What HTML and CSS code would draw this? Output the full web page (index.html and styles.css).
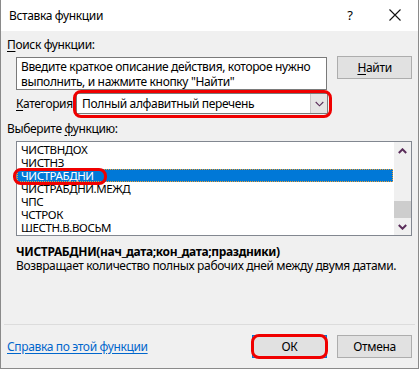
FILE: index.html
```html
<!DOCTYPE html>
<html lang="ru">
<head>
<meta charset="utf-8">
<title>Вставка функции</title>
<link rel="stylesheet" href="styles.css">
</head>
<body>
<div class="window">
  <div class="titlebar">
    <span class="title">Вставка функции</span>
    <span class="help">?</span>
    <svg class="close" width="12" height="12" viewBox="0 0 12 12"><path d="M0.5 0.5L11.5 11.5M11.5 0.5L0.5 11.5" stroke="#111" stroke-width="1.1" fill="none"/></svg>
  </div>
  <div class="content">
    <div class="label first"><u>П</u>оиск функции:</div>
    <div class="search-row">
      <div class="search-box">Введите краткое описание действия, которое нужно<br>выполнить, и нажмите кнопку "Найти"</div>
      <div class="btn find"><u>Н</u>айти</div>
    </div>
    <div class="cat-row">
      <span class="cat-label"><u>К</u>атегория:</span>
      <div class="select">
        <span class="select-text">Полный алфавитный перечень</span>
        <span class="drop"><svg width="9" height="6" viewBox="0 0 9 6"><path d="M0.7 1L4.5 4.8L8.3 1" stroke="#5a2d5a" stroke-width="1.1" fill="none"/></svg></span>
        <span class="mark mark-select"></span>
      </div>
    </div>
    <div class="label second">Выберите <u>ф</u>ункцию:</div>
    <div class="list">
      <div class="items">
        <div class="item">ЧИСТВНДОХ</div>
        <div class="item">ЧИСТНЗ</div>
        <div class="item selected">ЧИСТРАБДНИ<span class="mark mark-item"></span></div>
        <div class="item">ЧИСТРАБДНИ.МЕЖД</div>
        <div class="item">ЧПС</div>
        <div class="item">ЧСТРОК</div>
        <div class="item">ШЕСТН.В.ВОСЬМ</div>
      </div>
      <div class="scrollbar">
        <div class="arrow"><svg width="9" height="6" viewBox="0 0 9 6"><path d="M0.8 5L4.5 1.3L8.2 5" stroke="#5a2d5a" stroke-width="2" fill="none"/></svg></div>
        <div class="track"><div class="thumb"></div></div>
        <div class="arrow"><svg width="9" height="6" viewBox="0 0 9 6"><path d="M0.8 1L4.5 4.7L8.2 1" stroke="#5a2d5a" stroke-width="2" fill="none"/></svg></div>
      </div>
    </div>
    <div class="syntax">ЧИСТРАБДНИ(нач_дата;кон_дата;праздники)</div>
    <div class="desc">Возвращает количество полных рабочих дней между двумя датами.</div>
    <div class="spacer"></div>
    <div class="separator"></div>
    <div class="bottom-row">
      <a class="help-link" href="#">Справка по этой функции</a>
      <div class="buttons">
        <div class="btn ok">ОК<span class="mark mark-ok"></span></div>
        <div class="btn">Отмена</div>
      </div>
    </div>
  </div>
</div>
</body>
</html>
```
FILE: styles.css
```css
* { box-sizing: border-box; }
html, body { margin: 0; padding: 0; background: #ffffff; }
body { font-family: "Noto Sans", "Segoe UI", sans-serif; font-size: 12px; letter-spacing: -0.35px; color: #000; }
u { text-decoration: underline; text-underline-offset: 2px; }

.window {
  width: 419px;
  height: 369px;
  border: 1px solid #8a8a8a;
  border-top: none;
  display: flex;
  flex-direction: column;
  background: #f0f0f0;
}
.titlebar {
  height: 31px;
  background: #ffffff;
  display: flex;
  align-items: center;
  padding: 0 0 1px 8px;
}
.title { flex: 1; font-size: 12px; }
.help { font-size: 13px; width: 12px; margin-right: 33px; text-align: center; }
.close { margin-right: 17px; }

.content {
  flex: 1;
  display: flex;
  flex-direction: column;
  padding: 0 6px 0 6px;
}
.label { line-height: 15px; height: 15px; }
.label.first { margin-top: 6px; }
.label.second { margin-top: 7px; }

.search-row {
  display: flex;
  align-items: flex-start;
  margin: 5px 0 0 9px;
}
.search-box {
  width: 312px;
  height: 33px;
  background: #fff;
  border: 1px solid #7a7a7a;
  padding: 1px 0 0 4px;
  line-height: 15px;
  white-space: nowrap;
  overflow: hidden;
}
.btn {
  width: 75px;
  height: 23px;
  background: #e1e1e1;
  border: 1px solid #adadad;
  display: flex;
  align-items: center;
  justify-content: center;
  position: relative;
}
.find { margin: -1px 0 0 10px; }

.cat-row {
  display: flex;
  align-items: center;
  margin: 3px 0 0 9px;
  height: 21px;
}
.cat-label { width: 60px; white-space: nowrap; }
.select {
  position: relative;
  width: 252px;
  height: 21px;
  background: #fff;
  border: 1px solid #7a7a7a;
  display: flex;
  align-items: center;
}
.select-text { flex: 1; padding-left: 5px; }
.drop {
  width: 17px;
  height: 19px;
  background: #e5e5e5;
  border-left: 1px solid #c8c8c8;
  display: flex;
  align-items: center;
  justify-content: center;
}

.mark {
  position: absolute;
  border: 3px solid #f00000;
  pointer-events: none;
}
.mark-select { left: -4px; top: -4px; right: -5px; bottom: -5px; border-radius: 8px; }
.mark-item { left: -4px; top: -1px; width: 94px; bottom: -3px; border-radius: 8px; }
.mark-ok { left: -2px; top: -2px; right: -2px; bottom: -2px; border-radius: 8px; }

.list {
  margin: 5px 0 0 9px;
  width: 396px;
  height: 95px;
  background: #fff;
  border: 1px solid #828790;
  display: flex;
}
.items { flex: 1; padding-top: 1px; }
.item {
  position: relative;
  height: 13px;
  line-height: 13px;
  font-size: 11.5px;
  letter-spacing: -0.4px;
  padding-left: 4px;
  white-space: nowrap;
}
.item.selected {
  background: #0078d7;
  color: #fff;
  outline: 1px dotted #f0a030;
  outline-offset: -1px;
}
.scrollbar {
  width: 17px;
  background: #f0f0f0;
  display: flex;
  flex-direction: column;
  margin-left: 1px;
}
.arrow {
  height: 17px;
  display: flex;
  align-items: center;
  justify-content: center;
}
.track { flex: 1; display: flex; flex-direction: column; }
.thumb { margin-top: auto; height: 17px; background: #cdcdcd; }

.syntax { margin: 9px 0 0 9px; font-weight: bold; line-height: 14px; white-space: nowrap; }
.desc { margin-left: 9px; line-height: 14px; white-space: nowrap; }
.spacer { flex: 1; }
.separator { height: 1px; background: #dcdcdc; margin: 0 -3px; }
.bottom-row {
  display: flex;
  align-items: center;
  justify-content: space-between;
  height: 43px;
  padding-bottom: 1px;
}
.help-link { color: #0066cc; text-decoration: underline; text-underline-offset: 2px; }
.buttons { display: flex; gap: 10px; }
.ok { border-color: #0078d7; }
```
